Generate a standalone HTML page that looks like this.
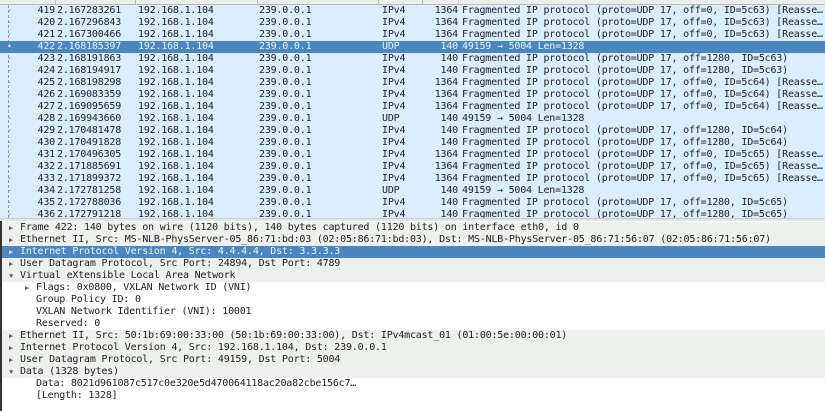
<!DOCTYPE html>
<html><head><style>
*{margin:0;padding:0;box-sizing:border-box}
body{width:825px;height:411px;overflow:hidden;background:#fff;font-family:"DejaVu Sans Mono","Liberation Mono",monospace;font-size:10px;letter-spacing:-0.2px;color:#222;position:relative}
.hdr{position:absolute;left:0;top:0;width:825px;height:5px;background:#eceeec;border-bottom:1px solid #bbb}
.hdr i{position:absolute;top:0;height:5px;border-left:1px solid #bbb}
.list{position:absolute;left:0;top:5px;width:825px;height:213px;background:#daeeff;overflow:hidden}
.r{position:absolute;left:0;width:825px;height:12px;line-height:12px;white-space:pre}
.r span{position:absolute;top:0}
.sel{background:#4a86bf;color:#eef4fa}
.tree{position:absolute;left:8px;top:0;height:213px;border-left:1px dashed #99a}
.split{position:absolute;left:0;top:218px;width:825px;height:3px;background:#e4e6e3;border-top:1px solid #ccc}
.det{position:absolute;left:0;top:221px;width:825px;height:190px;border-left:2px solid #333}
.d{position:absolute;left:0;width:823px;height:12px;line-height:12px;white-space:pre}
.g{background:#edf0ec}
.a{position:absolute;font-size:7px;color:#666}
</style></head><body>
<div class="hdr"><i style="left:55px"></i><i style="left:135px"></i><i style="left:257px"></i><i style="left:378px"></i><i style="left:422px"></i><i style="left:458px"></i></div>
<div class="list">
<div class="tree"></div>
<div id="rows"></div>
</div>
<div class="split"></div>
<div class="det">
<div class="d g" style="top:1px"><span class="a" style="left:7px">▶</span><span style="position:absolute;left:18px">Frame 422: 140 bytes on wire (1120 bits), 140 bytes captured (1120 bits) on interface eth0, id 0</span></div>
<div class="d g" style="top:13px"><span class="a" style="left:7px">▶</span><span style="position:absolute;left:18px">Ethernet II, Src: MS-NLB-PhysServer-05_86:71:bd:03 (02:05:86:71:bd:03), Dst: MS-NLB-PhysServer-05_86:71:56:07 (02:05:86:71:56:07)</span></div>
<div class="d sel" style="top:25px"><span class="a" style="left:7px;color:#dde">▶</span><span style="position:absolute;left:18px">Internet Protocol Version 4, Src: 4.4.4.4, Dst: 3.3.3.3</span></div>
<div class="d g" style="top:37px"><span class="a" style="left:7px">▶</span><span style="position:absolute;left:18px">User Datagram Protocol, Src Port: 24894, Dst Port: 4789</span></div>
<div class="d g" style="top:49px"><span class="a" style="left:7px">▼</span><span style="position:absolute;left:18px">Virtual eXtensible Local Area Network</span></div>
<div class="d" style="top:61px"><span class="a" style="left:23px">▶</span><span style="position:absolute;left:34px">Flags: 0x0800, VXLAN Network ID (VNI)</span></div>
<div class="d" style="top:73px"><span style="position:absolute;left:34px">Group Policy ID: 0</span></div>
<div class="d" style="top:85px"><span style="position:absolute;left:34px">VXLAN Network Identifier (VNI): 10001</span></div>
<div class="d" style="top:97px"><span style="position:absolute;left:34px">Reserved: 0</span></div>
<div class="d g" style="top:109px"><span class="a" style="left:7px">▶</span><span style="position:absolute;left:18px">Ethernet II, Src: 50:1b:69:00:33:00 (50:1b:69:00:33:00), Dst: IPv4mcast_01 (01:00:5e:00:00:01)</span></div>
<div class="d g" style="top:121px"><span class="a" style="left:7px">▶</span><span style="position:absolute;left:18px">Internet Protocol Version 4, Src: 192.168.1.104, Dst: 239.0.0.1</span></div>
<div class="d g" style="top:133px"><span class="a" style="left:7px">▶</span><span style="position:absolute;left:18px">User Datagram Protocol, Src Port: 49159, Dst Port: 5004</span></div>
<div class="d g" style="top:145px"><span class="a" style="left:7px">▼</span><span style="position:absolute;left:18px">Data (1328 bytes)</span></div>
<div class="d" style="top:157px"><span style="position:absolute;left:34px">Data: 8021d961087c517c0e320e5d470064118ac20a82cbe156c7…</span></div>
<div class="d" style="top:169px"><span style="position:absolute;left:34px">[Length: 1328]</span></div>
</div>
<script>
var d=[["419","2.167283261","IPv4","1364","Fragmented IP protocol (proto=UDP 17, off=0, ID=5c63) [Reasse…"],
["420","2.167296843","IPv4","1364","Fragmented IP protocol (proto=UDP 17, off=0, ID=5c63) [Reasse…"],
["421","2.167300466","IPv4","1364","Fragmented IP protocol (proto=UDP 17, off=0, ID=5c63) [Reasse…"],
["422","2.168185397","UDP","140","49159 → 5004 Len=1328"],
["423","2.168191863","IPv4","140","Fragmented IP protocol (proto=UDP 17, off=1280, ID=5c63)"],
["424","2.168194917","IPv4","140","Fragmented IP protocol (proto=UDP 17, off=1280, ID=5c63)"],
["425","2.168198298","IPv4","1364","Fragmented IP protocol (proto=UDP 17, off=0, ID=5c64) [Reasse…"],
["426","2.169083359","IPv4","1364","Fragmented IP protocol (proto=UDP 17, off=0, ID=5c64) [Reasse…"],
["427","2.169095659","IPv4","1364","Fragmented IP protocol (proto=UDP 17, off=0, ID=5c64) [Reasse…"],
["428","2.169943660","UDP","140","49159 → 5004 Len=1328"],
["429","2.170481478","IPv4","140","Fragmented IP protocol (proto=UDP 17, off=1280, ID=5c64)"],
["430","2.170491828","IPv4","140","Fragmented IP protocol (proto=UDP 17, off=1280, ID=5c64)"],
["431","2.170496305","IPv4","1364","Fragmented IP protocol (proto=UDP 17, off=0, ID=5c65) [Reasse…"],
["432","2.171885691","IPv4","1364","Fragmented IP protocol (proto=UDP 17, off=0, ID=5c65) [Reasse…"],
["433","2.171899372","IPv4","1364","Fragmented IP protocol (proto=UDP 17, off=0, ID=5c65) [Reasse…"],
["434","2.172781258","UDP","140","49159 → 5004 Len=1328"],
["435","2.172788036","IPv4","140","Fragmented IP protocol (proto=UDP 17, off=1280, ID=5c65)"],
["436","2.172791218","IPv4","140","Fragmented IP protocol (proto=UDP 17, off=1280, ID=5c65)"]];
var h="";
d.forEach(function(r,i){
h+='<div class="r'+(i==3?' sel':'')+'" style="top:'+(i*12)+'px">'+
'<span style="left:7px;font-size:8px;color:'+(i==3?'#fff':'#889')+'">'+(i==3?'•':'·')+'</span>'+
'<span style="right:770px">'+r[0]+'</span><span style="left:57px">'+r[1]+'</span>'+
'<span style="left:138px">192.168.1.104</span><span style="left:259px">239.0.0.1</span>'+
'<span style="left:382px">'+r[2]+'</span><span style="right:367px">'+r[3]+'</span>'+
'<span style="left:462px">'+r[4]+'</span></div>';});
document.getElementById("rows").innerHTML=h;
</script>
</body></html>
